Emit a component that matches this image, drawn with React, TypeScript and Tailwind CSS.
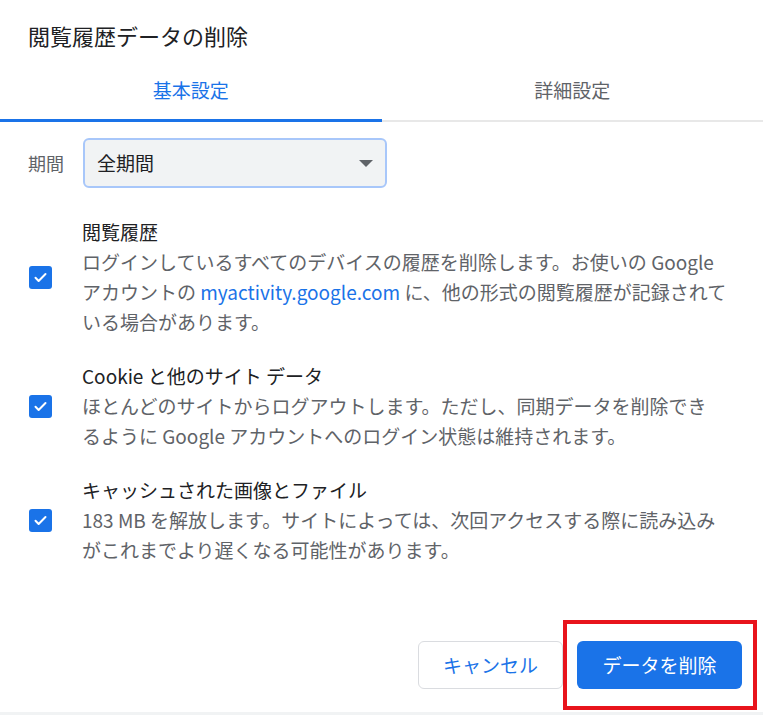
const FONT = { fontFamily: '"Noto Sans CJK JP", "Liberation Sans", sans-serif' };

type Item = {
  title: string;
  lines: React.ReactNode[];
};

const ITEMS: Item[] = [
  {
    title: "閲覧履歴",
    lines: [
      "ログインしているすべてのデバイスの履歴を削除します。お使いの Google",
      <>
        アカウントの <span className="text-[#1a73e8]">myactivity.google.com</span> に、他の形式の閲覧履歴が記録されて
      </>,
      "いる場合があります。",
    ],
  },
  {
    title: "Cookie と他のサイト データ",
    lines: [
      "ほとんどのサイトからログアウトします。ただし、同期データを削除でき",
      "るように Google アカウントへのログイン状態は維持されます。",
    ],
  },
  {
    title: "キャッシュされた画像とファイル",
    lines: [
      "183 MB を解放します。サイトによっては、次回アクセスする際に読み込み",
      "がこれまでより遅くなる可能性があります。",
    ],
  },
];

function Checkbox() {
  return (
    <div className="w-[23px] h-[23px] shrink-0 rounded-[3px] bg-[#1a73e8] flex items-center justify-center">
      <svg width="15" height="15" viewBox="0 0 24 24" fill="none">
        <path d="M4 12.5l5 5L20 6.5" stroke="white" strokeWidth="3.2" strokeLinecap="round" strokeLinejoin="round" />
      </svg>
    </div>
  );
}

export default function App() {
  return (
    <div style={FONT} className="relative w-[763px] h-[715px] bg-[#f1f3f4] overflow-hidden">
      <div className="h-[712px] bg-white flex flex-col">
        {/* Title */}
        <h1 className="pt-5 px-7 h-[50px] text-[22px] leading-[30px] text-[#202124]">閲覧履歴データの削除</h1>

        {/* Tabs */}
        <div className="mt-[10px] flex border-b-2 border-[#e8e8e8]">
          <div className="relative flex-1 h-[60px] flex items-center justify-center text-[19px] text-[#1a73e8]">
            基本設定
            <span className="absolute left-0 right-0 bottom-[-2px] h-[3px] bg-[#1a73e8]" />
          </div>
          <div className="flex-1 h-[60px] flex items-center justify-center text-[19px] text-[#5f6368]">
            詳細設定
          </div>
        </div>

        {/* Period */}
        <div className="mt-[16px] pl-7 flex items-center">
          <span className="w-[55px] text-[18px] text-[#5f6368]">期間</span>
          <div className="w-[304px] h-[50px] rounded-[6px] border-2 border-[#a8c7fa] bg-[#f1f3f4] flex items-center justify-between pl-[12px] pr-[12px]">
            <span className="text-[19px] text-[#202124]">全期間</span>
            <svg width="14" height="7" viewBox="0 0 14 7">
              <path d="M0 0h14L7 7z" fill="#5f6368" />
            </svg>
          </div>
        </div>

        {/* Items */}
        <div className="mt-[29px] flex flex-col gap-[24px]">
          {ITEMS.map((item) => (
            <div key={item.title} className="flex items-center pl-[29px]">
              <Checkbox />
              <div className="ml-[30px] text-[19px] leading-[30px] whitespace-nowrap">
                <div className="h-[30px] text-[#202124]">{item.title}</div>
                {item.lines.map((l, i) => (
                  <div key={i} className="h-[30px] text-[#5f6368]">
                    {l}
                  </div>
                ))}
              </div>
            </div>
          ))}
        </div>

        {/* Buttons */}
        <div className="mt-[76px] flex justify-end gap-[14px] pr-[21px]">
          <button className="w-[145px] h-[48px] rounded-[6px] border border-[#dadce0] bg-white text-[19px] text-[#1a73e8]">
            キャンセル
          </button>
          <button className="w-[165px] h-[48px] rounded-[6px] bg-[#1a73e8] text-[19px] text-white">
            データを削除
          </button>
        </div>
      </div>

      {/* Annotation */}
      <div className="absolute left-[563px] top-[620px] w-[194px] h-[90px] border-4 border-[#e8141c]" />
    </div>
  );
}
